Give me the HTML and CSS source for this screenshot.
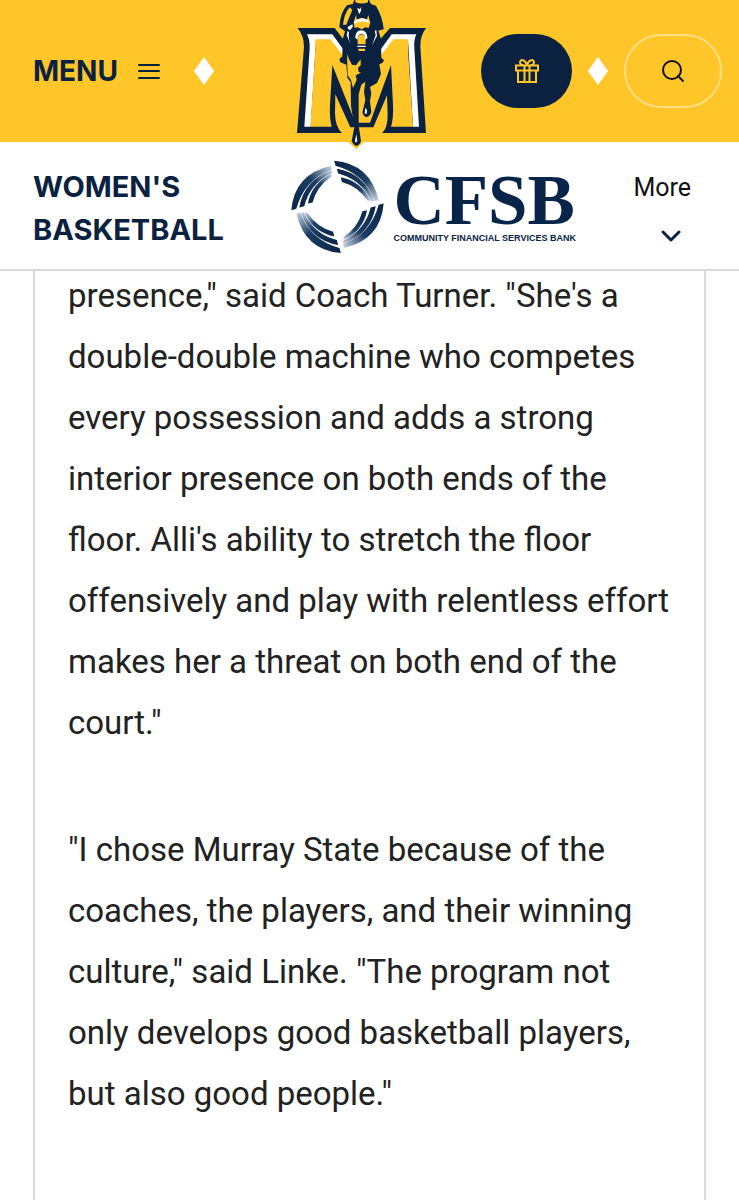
FILE: index.html
```html
<!DOCTYPE html>
<html lang="en">
<head>
<meta charset="utf-8">
<meta name="viewport" content="width=device-width, initial-scale=1">
<title>Women's Basketball</title>
<link rel="stylesheet" href="styles.css">
</head>
<body>
<header class="site-header">
  <div class="top-bar">
    <div class="group">
      <button class="menu" type="button">MENU
        <svg class="burger" viewBox="0 0 22 16" aria-hidden="true"><path d="M1 2H21M1 8H21M1 15H21"/></svg>
      </button>
      <svg class="diamond" viewBox="0 0 20 28" aria-hidden="true"><path d="M10 0 20 14 10 28 0 14Z"/></svg>
    </div>
    <a class="team-logo" href="#" aria-label="Home">
      <svg viewBox="48 0 390 450" aria-hidden="true">
        <path class="gold" d="M201 423 228 447 256 423V400H201Z"/>
        <path class="navy" d="M53 84H164L192 121 298 121 330 84H438Q420 108 421 140L438 399H306Q323 386 323 345L321 286 280 382H211L166 283 165 340Q166 382 186 399H51L72 140Q72 108 53 84Z"/>
        <path class="white" d="M81 103H157L200 162V205L153 145 108 119 92 380H73L89 145Q90 120 81 103ZM409 103H335L292 162V205L340 145 384 119 399 380H417L403 145Q401 120 409 103Z"/>
        <path class="gold" d="M106 118H151L200 180H292L340 118H384V150L399 380H333Q341 355 339 315L333 195 270 368H226L157 195 150 315Q148 355 155 380H91L106 150Z"/>
        <path class="navy" d="M223 0H267L273 12 288 17Q309 54 311 88L295 92 303 116 304 173 312 181 308 188 298 193 303 222 291 249 270 261 274 279 270 304 274 337Q269 352 257 351 246 345 248 334L256 300 252 276 256 245 244 254 236 283 236 376 243 423Q239 437 228 438 218 433 215 423L223 381 213 318 212 247 202 233 199 194 181 187 178 178 187 169 188 118 195 94 178 82Q180 38 201 16L218 12Z"/>
        <path class="gold" d="M226 0H264V7Q245 14 226 7ZM189 74Q193 40 209 22L217 30 206 56 199 74ZM228 45 231 60 245 54 260 60 265 45 271 68 266 84 256 82 245 88 233 82 224 84 221 67ZM233 112Q245 93 256 112L257 133H233ZM235 146H255V153H236ZM201 162 207 178 216 194 228 196 242 178V196L234 204 236 216 243 218 227 226 230 240 219 264 213 240 203 226Z"/>
        <path class="white" d="M232 23 240 28 244 20 243 33 237 43ZM222 65Q244 46 267 62L265 69Q244 57 224 71ZM203 81 217 73 219 79 211 90 204 87ZM226 114Q226 92 244 91 261 92 262 114L256 119Q255 101 244 101 234 101 232 119ZM203 93 200 105 211 132Q204 112 207 96ZM284 92 287 106 276 136 291 108 289 91ZM232 137H257V141H232ZM256 324 261 330 260 341 254 341ZM229 403 232 423 227 428 225 422Z"/>
      </svg>
    </a>
    <div class="group actions">
      <button class="pill gift" type="button" aria-label="Give">
        <svg viewBox="0 0 24 24" aria-hidden="true"><path d="M1 6.500H23V11.500H1ZM3 11.500V23H21V11.500M9.500 6.500V23M14.500 6.500V23M12 6C10 0 5 0 5 3.500C5 6 7.500 6.500 12 6.500C16.500 6.500 19 6 19 3.500C19 0 14 0 12 6"/></svg>
      </button>
      <svg class="diamond" viewBox="0 0 20 28" aria-hidden="true"><path d="M10 0 20 14 10 28 0 14Z"/></svg>
      <button class="pill search" type="button" aria-label="Search">
        <svg viewBox="0 0 24 24" aria-hidden="true"><circle cx="11" cy="11" r="9"/><path d="m17 17 5 5"/></svg>
      </button>
    </div>
  </div>
  <div class="sport-bar">
    <h1 class="sport">WOMEN'S BASKETBALL</h1>
    <a class="sponsor" href="#">
      <svg class="swirl" viewBox="14 8 286 286" aria-hidden="true">
        <defs>
          <linearGradient id="fade" x1="0" y1="1" x2="1" y2="0"><stop offset="0" stop-color="#082448"/><stop offset=".6" stop-color="#1d3d63"/><stop offset="1" stop-color="#c9d6e5"/></linearGradient>
          <g id="blades" fill="url(#fade)">
            <path d="M18 159Q27 50 138 25L139 37Q57 67 33 155Z"/>
            <path d="M42 151Q56 68 140 38V47Q74 79 57 147Z"/>
            <path d="M68 139Q79 79 139 49V58Q95 87 82 136Z"/>
          </g>
        </defs>
        <use href="#blades"/>
        <use href="#blades" transform="rotate(90 157 149)"/>
        <use href="#blades" transform="rotate(180 157 149)"/>
        <use href="#blades" transform="rotate(270 157 149)"/>
      </svg>
      <span class="bank"><span class="bank-name">CFSB</span><span class="bank-line">COMMUNITY FINANCIAL SERVICES BANK</span></span>
    </a>
    <button class="more" type="button">More
      <svg viewBox="0 0 20 12" aria-hidden="true"><path d="m2 2 8 8 8-8"/></svg>
    </button>
  </div>
</header>
<main class="story">
  <p>presence," said Coach Turner. "She's a double-double machine who competes every possession and adds a strong interior presence on both ends of the floor. Alli's ability to stretch the floor offensively and play with relentless effort makes her a threat on both end of the court."</p>
  <p>"I chose Murray State because of the coaches, the players, and their winning culture," said Linke. "The program not only develops good basketball players, but also good people."</p>
</main>
</body>
</html>
```
FILE: styles.css
```css
* { box-sizing: border-box; }
body {
  margin: 0;
  min-height: 100vh;
  display: flex;
  flex-direction: column;
  background: #fff;
  color: #222;
  font-family: Roboto, sans-serif;
}
button {
  border: 0;
  padding: 0;
  background: none;
  color: inherit;
  font: inherit;
  cursor: pointer;
}
svg { display: block; }
.site-header {
  position: sticky;
  top: 0;
  z-index: 1;
  background: #fff;
  border-bottom: 2px solid #dadada;
}
.top-bar {
  height: 142px;
  padding: 0 17px 0 33px;
  display: flex;
  align-items: center;
  justify-content: space-between;
  background: #ffc62a;
}
.group { display: flex; align-items: center; gap: 34px; }
.actions { gap: 16px; }
.menu {
  display: flex;
  align-items: center;
  gap: 20px;
  color: #0a2240;
  font: 700 28px/40px Inter, sans-serif;
}
.burger { width: 22px; height: 16px; stroke: #0a2240; stroke-width: 2; stroke-linecap: round; }
.diamond { width: 20px; height: 28px; fill: #fff; }
.team-logo { align-self: flex-start; margin-left: 27px; }
.team-logo svg { width: 130px; height: 150px; }
.navy { fill: #0a2240; }
.gold { fill: #ffc62a; }
.white { fill: #fff; }
.pill {
  height: 74px;
  border-radius: 37px;
  display: grid;
  place-items: center;
}
.pill svg { width: 24px; height: 24px; fill: none; stroke-width: 2; stroke-linecap: round; }
.gift { width: 91px; background: #0a2240; stroke: #ffc62a; }
.search { width: 98px; border: 2px solid #ffdf85; stroke: #111; }
.sport-bar {
  height: 127px;
  padding: 4px 48px 0 33px;
  display: flex;
  align-items: center;
  justify-content: space-between;
}
.sport {
  width: 200px;
  margin: 0;
  color: #0a2240;
  font: 700 29px/43px Inter, sans-serif;
}
.sponsor {
  display: flex;
  align-items: center;
  gap: 8px;
  color: #082448;
  text-decoration: none;
}
.swirl { width: 95px; height: 95px; }
.bank { display: flex; flex-direction: column; gap: 3px; }
.bank-name { font: 700 71px/58px "Liberation Serif", serif; }
.bank-line { font: 700 9px/12px "Liberation Sans", sans-serif; white-space: nowrap; }
.more {
  display: flex;
  flex-direction: column;
  align-items: flex-end;
  gap: 28px;
  color: #111;
  font-size: 25px;
  line-height: 28px;
}
.more svg { width: 20px; height: 12px; margin-right: 10px; fill: none; stroke: #0a2240; stroke-width: 3; stroke-linecap: round; stroke-linejoin: round; }
.story {
  flex: 1;
  margin: -6px 33px 0;
  padding: 0 31px 0 33px;
  border: solid #dadada;
  border-width: 0 2px;
  font-size: 33px;
  line-height: 61px;
}
.story p { margin: 0 0 66px; }
```
